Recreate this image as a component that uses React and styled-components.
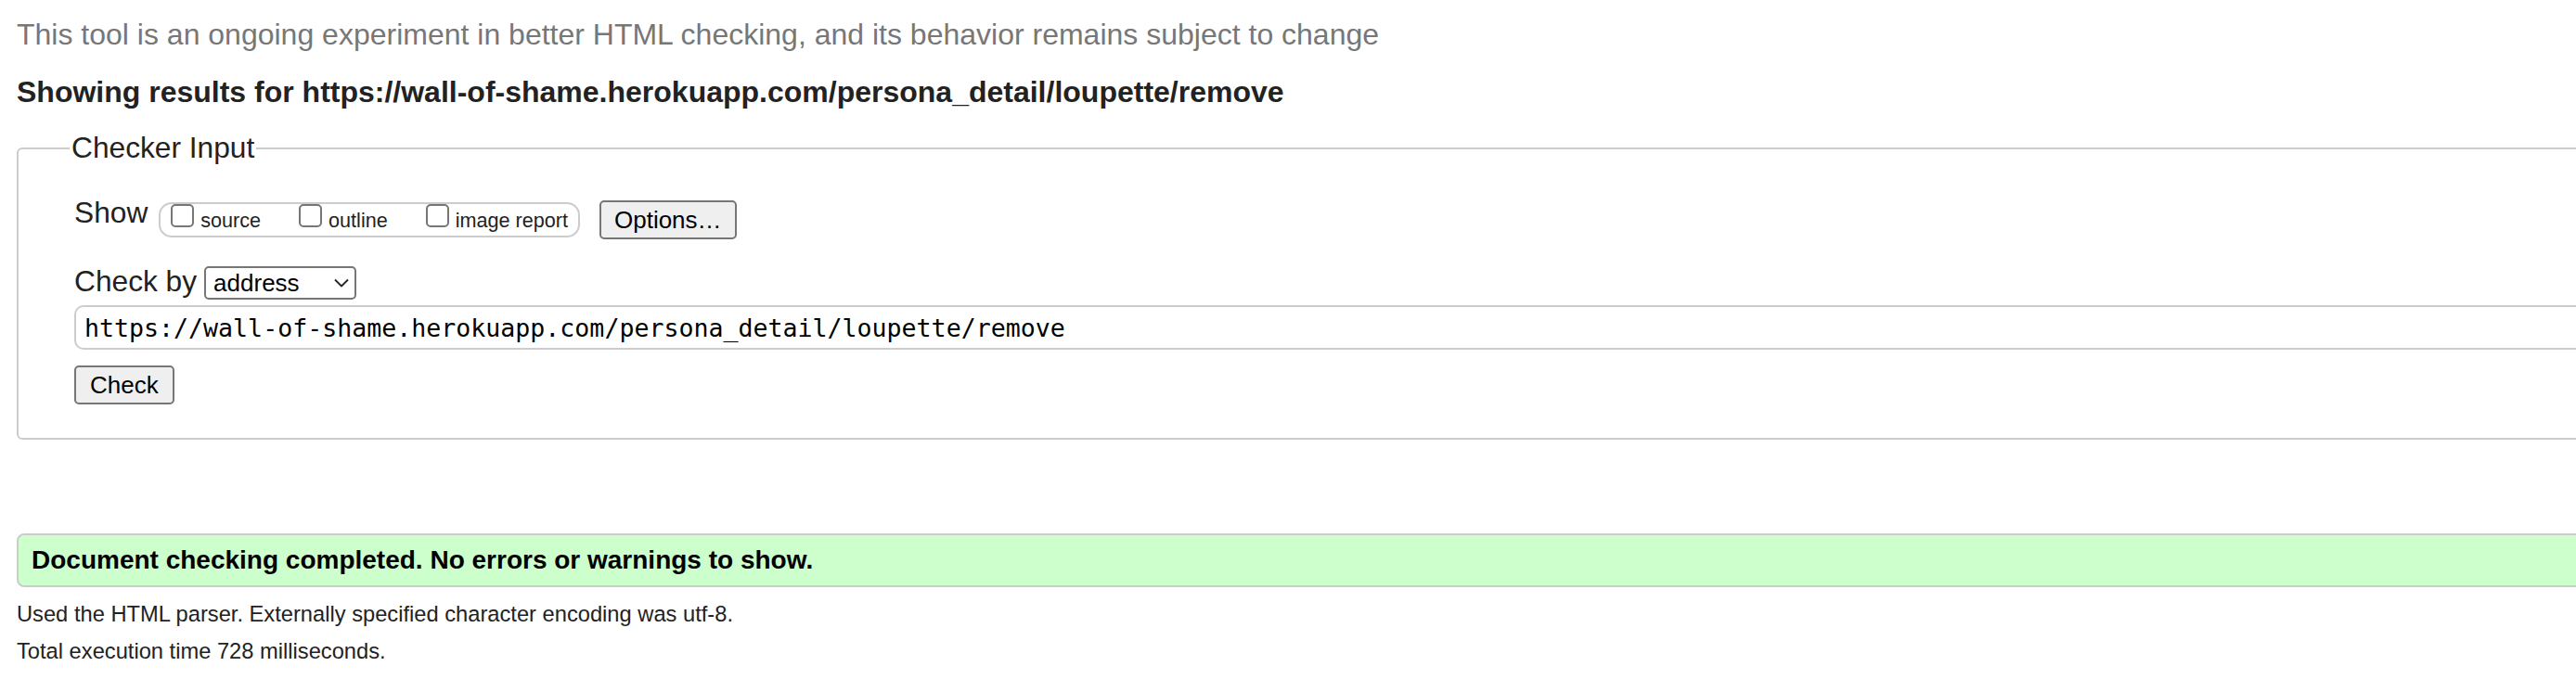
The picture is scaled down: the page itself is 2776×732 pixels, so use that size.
import React from "react";
import styled, { createGlobalStyle } from "styled-components";

const GlobalStyle = createGlobalStyle`
    html, body {
        margin: 0;
        padding: 0;
        overflow: hidden;
        background: #fff;
    }
    body {
        font-family: "Liberation Sans", Arial, sans-serif;
        color: #222;
    }
`;

const Page = styled.div`
    width: 3000px;
    padding: 0 18px;
    box-sizing: border-box;
`;

const Intro = styled.p`
    margin: 19px 0 0;
    font-size: 32px;
    color: #777;
`;

const Heading = styled.h2`
    margin: 25px 0 0;
    font-size: 32px;
    font-weight: bold;
    color: #222;
`;

const Fieldset = styled.fieldset`
    margin: 23px 0 0;
    padding: 33px 0 36px 60px;
    border: 2px solid #ccc;
    border-radius: 6px;
`;

const Legend = styled.legend`
    font-size: 31.7px;
    padding: 0 2px;
    margin-left: -5px;
`;

const Row = styled.div`
    display: flex;
    align-items: flex-start;
    margin-top: ${(p) => p.$top || 0}px;
`;

const Label = styled.span`
    font-size: 31.7px;
    line-height: 36px;
    margin-right: ${(p) => p.$gap || 0}px;
`;

const OptionGroup = styled.div`
    display: flex;
    align-items: flex-start;
    margin-top: 7px;
    height: 34px;
    padding: 0 11px;
    border: 2px solid #ccc;
    border-radius: 14px;
    gap: 41px;
`;

const Option = styled.label`
    display: flex;
    align-items: flex-start;
    font-size: 21.6px;
`;

const OptionText = styled.span`
    line-height: 25px;
    margin-top: 5px;
`;

const Box = styled.input.attrs({ type: "checkbox" })`
    appearance: none;
    width: 25px;
    height: 25px;
    margin: 0 7px 0 0;
    border: 2px solid #767676;
    border-radius: 5px;
    background: #fff;
    box-sizing: border-box;
`;

const Button = styled.button`
    margin: ${(p) => p.$top || 0}px 0 0 ${(p) => p.$left || 0}px;
    height: 42px;
    padding: 0 ${(p) => p.$pad || 15}px;
    font-family: "Liberation Sans", Arial, sans-serif;
    font-size: 26px;
    color: #000;
    background: #efefef;
    border: 2px solid #767676;
    border-radius: 5px;
`;

const SelectWrap = styled.div`
    position: relative;
    margin-top: 2px;
`;

const Select = styled.select`
    appearance: none;
    width: 164px;
    height: 36px;
    padding: 0 0 0 8px;
    font-family: "Liberation Sans", Arial, sans-serif;
    font-size: 26px;
    color: #000;
    background: #fff;
    border: 2px solid #767676;
    border-radius: 5px;
`;

const Chevron = styled.svg`
    position: absolute;
    right: 8px;
    top: 13px;
    pointer-events: none;
`;

const UrlInput = styled.input`
    display: block;
    width: 100%;
    box-sizing: border-box;
    margin-top: 6px;
    height: 48px;
    padding: 0 9px;
    font-family: "DejaVu Sans Mono", monospace;
    font-size: 26.6px;
    color: #000;
    border: 2px solid #ccc;
    border-radius: 10px;
`;

const Success = styled.div`
    margin-top: 101px;
    height: 54px;
    display: flex;
    align-items: center;
    padding: 0 14px;
    background: #cfc;
    border: 2px solid #ccc;
    border-radius: 8px;
    font-size: 28px;
    font-weight: bold;
    color: #000;
`;

const Note = styled.p`
    margin: ${(p) => p.$top}px 0 0;
    font-size: 23.7px;
    color: #222;
`;

const url = "https://wall-of-shame.herokuapp.com/persona_detail/loupette/remove";

const options = ["source", "outline", "image report"];

const App = () => (
    <Page>
        <GlobalStyle />
        <Intro>
            This tool is an ongoing experiment in better HTML checking, and its
            behavior remains subject to change
        </Intro>
        <Heading>Showing results for {url}</Heading>
        <Fieldset>
            <Legend>Checker Input</Legend>
            <Row>
                <Label $gap={12}>Show</Label>
                <OptionGroup>
                    {options.map((o) => (
                        <Option key={o}>
                            <Box />
                            <OptionText>{o}</OptionText>
                        </Option>
                    ))}
                </OptionGroup>
                <Button $top={5} $left={21} $pad={14}>
                    Options…
                </Button>
            </Row>
            <Row $top={27}>
                <Label $gap={8}>Check by</Label>
                <SelectWrap>
                    <Select defaultValue="address">
                        <option value="address">address</option>
                        <option value="file">file upload</option>
                        <option value="text">text input</option>
                    </Select>
                    <Chevron width="16" height="10" viewBox="0 0 16 10">
                        <path
                            d="M1 1.5 L8 8.5 L15 1.5"
                            fill="none"
                            stroke="#222"
                            strokeWidth="1.8"
                        />
                    </Chevron>
                </SelectWrap>
            </Row>
            <UrlInput defaultValue={url} />
            <Button $top={17}>Check</Button>
        </Fieldset>
        <Success>Document checking completed. No errors or warnings to show.</Success>
        <Note $top={16}>
            Used the HTML parser. Externally specified character encoding was
            utf-8.
        </Note>
        <Note $top={13}>Total execution time 728 milliseconds.</Note>
    </Page>
);

export default App;
